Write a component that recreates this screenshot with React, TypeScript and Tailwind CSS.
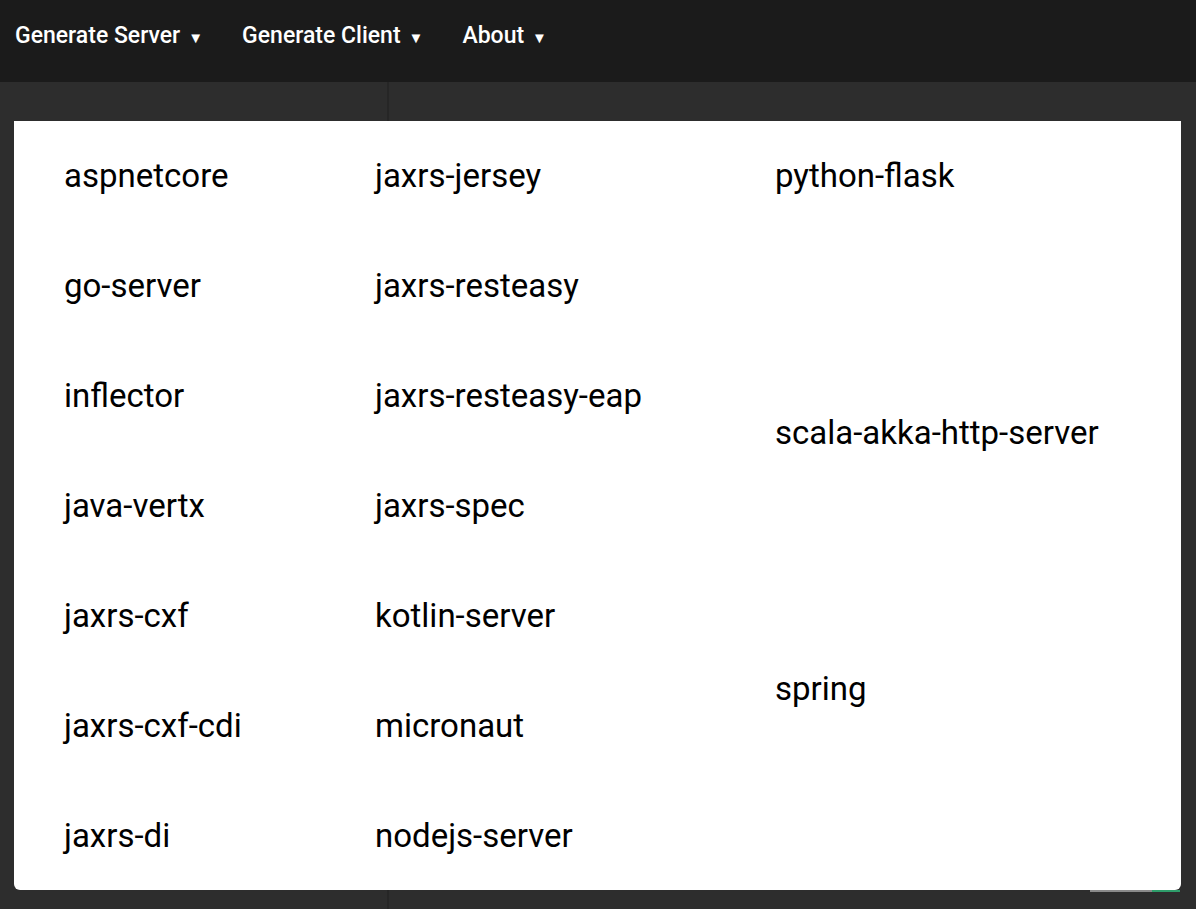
import React from 'react';

const navItems = ['Generate Server', 'Generate Client', 'About'];

const col1 = ['aspnetcore', 'go-server', 'inflector', 'java-vertx', 'jaxrs-cxf', 'jaxrs-cxf-cdi', 'jaxrs-di'];
const col2 = [
  'jaxrs-jersey',
  'jaxrs-resteasy',
  'jaxrs-resteasy-eap',
  'jaxrs-spec',
  'kotlin-server',
  'micronaut',
  'nodejs-server',
];

const Item = ({ label, className = '' }: { label: string; className?: string }) => (
  <li className={`h-[110px] shrink-0 flex items-center px-[50px] text-[33px] text-black whitespace-nowrap ${className}`}>
    {label}
  </li>
);

export default function App() {
  return (
    <div className="relative min-h-[909px] bg-[#2d2d2d]" style={{ fontFamily: 'Roboto, "Liberation Sans", sans-serif' }}>
      <nav className="h-[82px] bg-[#1b1b1b] flex items-start pt-[22px] pl-[15px] gap-[39px]">
        {navItems.map((n) => (
          <div key={n} className="flex items-baseline gap-[8px] text-white text-[23px] font-medium leading-[28px]">
            <span>{n}</span>
            <span className="text-[15px]">▼</span>
          </div>
        ))}
      </nav>

      <div className="flex h-[827px]">
        <aside className="w-[389px] border-r-2 border-[#262626]" />
        <main className="flex-1" />
      </div>

      {/* bits of the page peeking out under the menu */}
      <div className="absolute top-[890px] left-[1090px] w-[62px] h-[2px] bg-[#8a8a8a]" />
      <div className="absolute top-[890px] left-[1152px] w-[28px] h-[2px] bg-[#2e9d6a]" />

      <div className="absolute top-[121px] left-[14px] w-[1167px] h-[769px] bg-white rounded-b-md flex overflow-hidden">
        <ul className="w-[311px] flex flex-col">
          {col1.map((c) => (
            <Item key={c} label={c} />
          ))}
        </ul>
        <ul className="w-[400px] flex flex-col">
          {col2.map((c) => (
            <Item key={c} label={c} />
          ))}
        </ul>
        <ul className="flex-1 flex flex-col">
          <Item label="python-flask" />
          <Item label="scala-akka-http-server" className="mt-[147px]" />
          <Item label="spring" className="mt-[146px]" />
        </ul>
      </div>
    </div>
  );
}
